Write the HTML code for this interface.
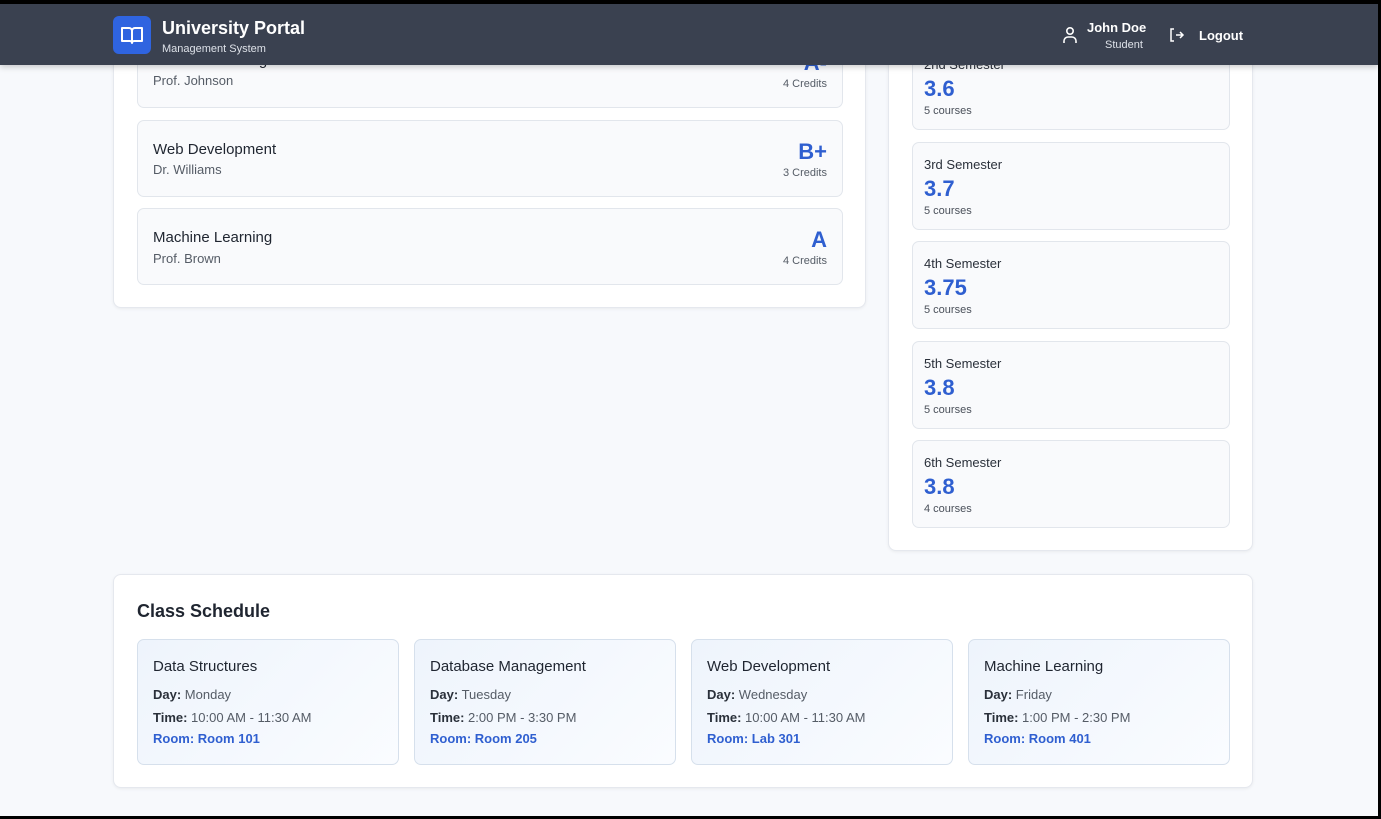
<!DOCTYPE html>
<html><head><meta charset="utf-8"><style>
*{box-sizing:border-box;margin:0;padding:0}
body{width:1381px;height:819px;overflow:hidden;background:#000;font-family:"Liberation Sans",sans-serif;position:relative}
.page{position:absolute;left:0;top:4px;width:1378px;height:812px;background:#f7f9fc;overflow:hidden}
.card{position:absolute;background:#fff;border:1px solid #e5e8ee;border-radius:8px;box-shadow:0 1px 3px rgba(0,0,0,.06)}
.item{position:absolute;background:#f9fafc;border:1px solid #e2e6ec;border-radius:7px}
.ct{position:absolute;left:15px;font-size:15px;color:#1f2530}
.cs{position:absolute;left:15px;font-size:13px;color:#555c66}
.gr{position:absolute;right:15px;font-size:22px;font-weight:bold;color:#2f5fd0;text-align:right}
.cr{position:absolute;right:15px;font-size:11px;color:#555c66}
.sn{position:absolute;left:11px;top:14px;font-size:13px;color:#2a303a}
.sg{position:absolute;left:11px;top:33px;font-size:22px;font-weight:bold;color:#2f5fd0}
.sc{position:absolute;left:11px;top:62px;font-size:11px;color:#4a505a}
.sch{position:absolute;top:65px;width:262px;height:126px;border:1px solid #d6e0ec;border-radius:7px;background:linear-gradient(135deg,#eef4fc,#fafcff)}
.sch .t{position:absolute;left:15px;top:18px;font-size:15px;color:#1f2530}
.sch .l{position:absolute;left:15px;font-size:13px;color:#555c66}
.sch .l b{color:#2a303a;font-weight:bold}
.sch .r{position:absolute;left:15px;top:91px;font-size:13px;color:#2f5fd0;font-weight:bold}
.hdr{position:absolute;left:0;top:0;width:1378px;height:61px;background:#3a4150;box-shadow:0 2px 6px rgba(0,0,0,.2)}
</style></head><body>
<div class="page">
<div class="card" style="left:113px;top:-20px;width:753px;height:324px">
 <div class="item" style="left:23px;top:46px;width:706px;height:77px"><div class="ct" style="top:20px">Database Management</div><div class="cs" style="top:41px">Prof. Johnson</div><div class="gr" style="top:18px">A-</div><div class="cr" style="top:46px">4 Credits</div></div>
 <div class="item" style="left:23px;top:135px;width:706px;height:77px"><div class="ct" style="top:20px">Web Development</div><div class="cs" style="top:41px">Dr. Williams</div><div class="gr" style="top:18px">B+</div><div class="cr" style="top:46px">3 Credits</div></div>
 <div class="item" style="left:23px;top:223px;width:706px;height:77px"><div class="ct" style="top:20px">Machine Learning</div><div class="cs" style="top:42px">Prof. Brown</div><div class="gr" style="top:18px">A</div><div class="cr" style="top:46px">4 Credits</div></div>
</div>
<div class="card" style="left:888px;top:-20px;width:365px;height:567px">
 <div class="item" style="left:23px;top:57px;width:318px;height:88px"><div class="sn">2nd Semester</div><div class="sg">3.6</div><div class="sc">5 courses</div></div>
 <div class="item" style="left:23px;top:157px;width:318px;height:88px"><div class="sn">3rd Semester</div><div class="sg">3.7</div><div class="sc">5 courses</div></div>
 <div class="item" style="left:23px;top:256px;width:318px;height:88px"><div class="sn">4th Semester</div><div class="sg">3.75</div><div class="sc">5 courses</div></div>
 <div class="item" style="left:23px;top:356px;width:318px;height:88px"><div class="sn">5th Semester</div><div class="sg">3.8</div><div class="sc">5 courses</div></div>
 <div class="item" style="left:23px;top:455px;width:318px;height:88px"><div class="sn">6th Semester</div><div class="sg">3.8</div><div class="sc">4 courses</div></div>
</div>
<div class="card" style="left:113px;top:570px;width:1140px;height:214px">
 <div style="position:absolute;left:23px;top:26px;font-size:18px;font-weight:bold;color:#1f2530">Class Schedule</div>
 <div class="sch" style="left:23px;top:64px"><div class="t">Data Structures</div><div class="l" style="top:47px"><b>Day:</b> Monday</div><div class="l" style="top:70px"><b>Time:</b> 10:00 AM - 11:30 AM</div><div class="r">Room: Room 101</div></div>
 <div class="sch" style="left:300px;top:64px"><div class="t">Database Management</div><div class="l" style="top:47px"><b>Day:</b> Tuesday</div><div class="l" style="top:70px"><b>Time:</b> 2:00 PM - 3:30 PM</div><div class="r">Room: Room 205</div></div>
 <div class="sch" style="left:577px;top:64px"><div class="t">Web Development</div><div class="l" style="top:47px"><b>Day:</b> Wednesday</div><div class="l" style="top:70px"><b>Time:</b> 10:00 AM - 11:30 AM</div><div class="r">Room: Lab 301</div></div>
 <div class="sch" style="left:854px;top:64px"><div class="t">Machine Learning</div><div class="l" style="top:47px"><b>Day:</b> Friday</div><div class="l" style="top:70px"><b>Time:</b> 1:00 PM - 2:30 PM</div><div class="r">Room: Room 401</div></div>
</div>
<div class="hdr">
 <div style="position:absolute;left:113px;top:12px;width:38px;height:38px;background:#2f64e0;border-radius:6px">
  <svg width="38" height="38" viewBox="0 0 38 38" fill="none" stroke="#fff" stroke-width="2" stroke-linejoin="round"><path d="M9 12h7a3 3 0 0 1 3 3v12a2 2 0 0 0-2-2H9zM29 12h-7a3 3 0 0 0-3 3v12a2 2 0 0 1 2-2h8z"/></svg>
 </div>
 <div style="position:absolute;left:162px;top:14px;font-size:18px;font-weight:bold;color:#fff">University Portal</div>
 <div style="position:absolute;left:162px;top:39px;font-size:11px;color:#dde1e8">Management System</div>
 <svg style="position:absolute;left:1062px;top:22px" width="16" height="18" viewBox="0 0 16 18" fill="none" stroke="#fff" stroke-width="1.6"><circle cx="8" cy="5" r="3.2"/><path d="M2 17v-2a4 4 0 0 1 4-4h4a4 4 0 0 1 4 4v2"/></svg>
 <div style="position:absolute;left:1087px;top:16px;font-size:13px;font-weight:bold;color:#fff">John Doe</div>
 <div style="position:absolute;left:1105px;top:35px;font-size:11px;color:#dde1e8">Student</div>
 <svg style="position:absolute;left:1169px;top:23px" width="16" height="16" viewBox="0 0 16 16" fill="none" stroke="#fff" stroke-width="1.5"><path d="M5 2H2v12h3M7 8h7M11 5l3 3-3 3"/></svg>
 <div style="position:absolute;left:1199px;top:24px;font-size:13px;font-weight:bold;color:#fff">Logout</div>
</div>
</div>
</body></html>
